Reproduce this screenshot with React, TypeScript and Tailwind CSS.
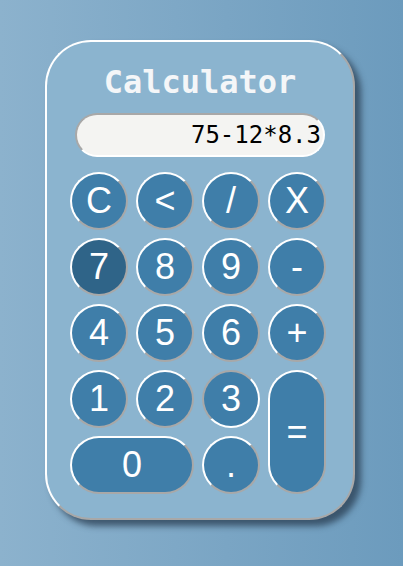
import React from "react";

type Key = {
  label: string;
  span?: "row" | "col";
  dark?: boolean;
  pressed?: boolean;
};

const keys: Key[] = [
  { label: "C" },
  { label: "<" },
  { label: "/" },
  { label: "X" },
  { label: "7", dark: true },
  { label: "8" },
  { label: "9" },
  { label: "-" },
  { label: "4" },
  { label: "5" },
  { label: "6" },
  { label: "+" },
  { label: "1" },
  { label: "2" },
  { label: "3", pressed: true },
  { label: "=", span: "row" },
  { label: "0", span: "col" },
  { label: "." },
];

const CalcButton = ({ label, span, dark, pressed }: Key) => {
  const size =
    span === "row"
      ? "row-span-2 w-[58px] h-full"
      : span === "col"
        ? "col-span-2 w-full h-[58px]"
        : "w-[58px] h-[58px]";
  const bg = dark ? "bg-[#2f6488]" : "bg-[#3f7ea9]";
  const border = pressed
    ? "border-t-[#a8a8a8] border-l-[#a8a8a8] border-b-white border-r-white"
    : "border-t-white border-l-white border-b-[#a8a8a8] border-r-[#a8a8a8]";

  return (
    <button
      className={`flex items-center justify-center rounded-full text-white text-[36px] leading-none border-2 ${size} ${bg} ${border}`}
      style={{ fontFamily: '"Liberation Sans", Arial, sans-serif' }}
    >
      {label}
    </button>
  );
};

const App = () => {
  return (
    <div className="w-[403px] h-[566px] bg-gradient-to-r from-[#8cb2cd] to-[#6c9bbd] flex pl-[45px] pt-[40px]">
      <div className="w-[310px] h-[480px] rounded-[46px] bg-[#8bb4cf] border-2 border-t-white border-l-white border-b-[#a8a8a8] border-r-[#a8a8a8] shadow-[6px_6px_6px_rgba(40,60,80,0.75)] flex flex-col items-center">
        <h1
          className="mt-[20px] text-[32px] font-bold text-[#f4f6f8] leading-[40px]"
          style={{ fontFamily: '"DejaVu Sans Mono", monospace' }}
        >
          Calculator
        </h1>
        <div
          className="mt-[11px] w-[250px] h-[44px] rounded-full bg-[#f4f4f2] border-2 border-t-[#a8a8a8] border-l-[#a8a8a8] border-b-white border-r-white flex items-center justify-end pr-[2px] text-[24px] text-black"
          style={{ fontFamily: '"DejaVu Sans Mono", monospace' }}
        >
          75-12*8.3
        </div>
        <div className="mt-[15px] mr-[4px] grid grid-cols-[repeat(4,58px)] grid-rows-[repeat(5,58px)] gap-[8px]">
          {keys.map((k) => (
            <CalcButton key={k.label} {...k} />
          ))}
        </div>
      </div>
    </div>
  );
};

export default App;
